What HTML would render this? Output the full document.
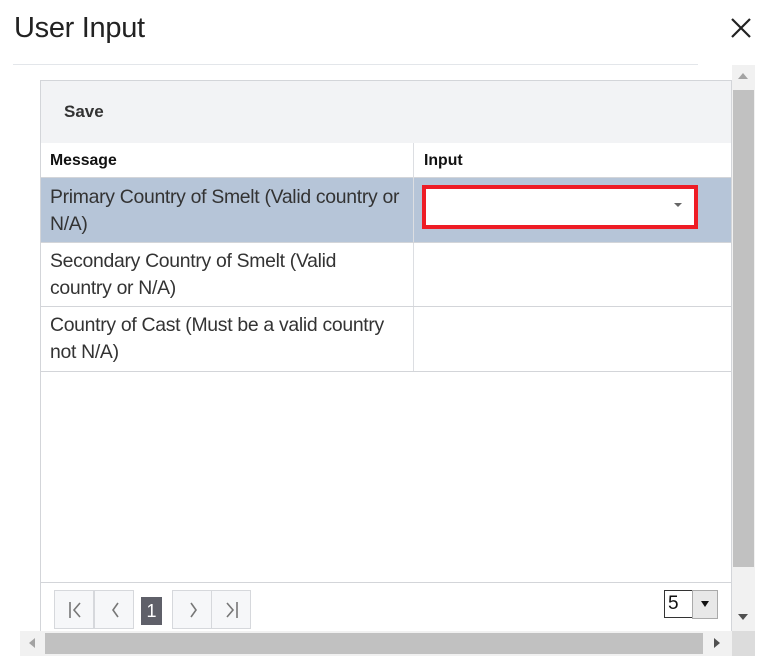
<!DOCTYPE html>
<html><head><style>
*{margin:0;padding:0;box-sizing:border-box}
body{width:772px;height:667px;background:#fff;position:relative;overflow:hidden;font-family:"Liberation Sans",Arial,sans-serif;color:#333}
.a{position:absolute}
.cell{position:absolute;font-size:19.4px;line-height:27px;color:#333;padding-left:10px;letter-spacing:-0.3px;white-space:nowrap}
.pb{position:absolute;top:590px;height:39px;width:40px;background:#f6f7f9;border:1px solid #d6d8dc}
.pb svg{position:absolute;left:12px;top:10px}
</style></head><body>
<div class="a" style="left:14px;top:12px;font-size:29px;color:#222;letter-spacing:-0.3px">User Input</div>
<svg class="a" style="left:730px;top:17px" width="22" height="22"><path d="M2 2L20 20M20 2L2 20" stroke="#222" stroke-width="2.2"/></svg>
<div class="a" style="left:13px;top:64px;width:685px;height:1px;background:#e3e6ea"></div>

<div class="a" style="left:40px;top:80px;width:692px;height:560px;border:1px solid #d3d5d9;background:#fff"></div>
<div class="a" style="left:41px;top:81px;width:690px;height:62px;background:#f2f3f5"></div>
<div class="a" style="left:64px;top:102px;font-size:17px;font-weight:bold;color:#333">Save</div>
<div class="a" style="left:41px;top:143px;width:690px;height:34px;background:#fff"></div>
<div class="a" style="left:50px;top:152px;font-size:15.8px;font-weight:bold;color:#111">Message</div>
<div class="a" style="left:424px;top:152px;font-size:15.8px;font-weight:bold;color:#111">Input</div>
<div class="a" style="left:413px;top:143px;width:1px;height:229px;background:#dcdee2"></div>
<div class="a" style="left:41px;top:177px;width:690px;height:65px;background:#b6c5d8;border-top:1px solid #d3d5d9"></div>
<div class="a" style="left:413px;top:177px;width:1px;height:65px;background:#dcdee2"></div>
<div class="cell" style="left:40px;top:184px">Primary Country of Smelt (Valid country or<br>N/A)</div>
<div class="a" style="left:422px;top:185px;width:276px;height:44px;border:4px solid #ee1c25;background:#fff"></div>
<svg class="a" style="left:674px;top:202px" width="8" height="6"><path d="M0 1L8 1L4 5Z" fill="#666"/></svg>
<div class="a" style="left:41px;top:242px;width:690px;height:1px;background:#d3d5d9"></div>
<div class="cell" style="left:40px;top:248px">Secondary Country of Smelt (Valid<br>country or N/A)</div>
<div class="a" style="left:41px;top:306px;width:690px;height:1px;background:#d3d5d9"></div>
<div class="cell" style="left:40px;top:312px">Country of Cast (Must be a valid country<br>not N/A)</div>
<div class="a" style="left:41px;top:371px;width:690px;height:1px;background:#d3d5d9"></div>
<div class="a" style="left:41px;top:582px;width:690px;height:1px;background:#d3d5d9"></div>

<div class="pb" style="left:54px"><svg width="16" height="18"><path d="M3 1V17M13 2L7 9L13 16" stroke="#777" stroke-width="1.6" fill="none"/></svg></div>
<div class="pb" style="left:94px"><svg width="16" height="18"><path d="M11 2L6 9L11 16" stroke="#777" stroke-width="1.6" fill="none"/></svg></div>
<div class="a" style="left:141px;top:597px;width:21px;height:28px;background:#5f6069;color:#fff;font-size:18px;text-align:center;line-height:28px">1</div>
<div class="pb" style="left:172px"><svg width="16" height="18"><path d="M6 2L11 9L6 16" stroke="#777" stroke-width="1.6" fill="none"/></svg></div>
<div class="pb" style="left:211px"><svg width="16" height="18"><path d="M3 2L9 9L3 16M13 1V17" stroke="#777" stroke-width="1.6" fill="none"/></svg></div>
<div class="a" style="left:664px;top:590px;width:28px;height:28px;border:1px solid #333;border-right:none;background:#fff;font-size:19px;line-height:26px;padding-left:3px;color:#111">5</div>
<div class="a" style="left:692px;top:590px;width:26px;height:29px;background:#e8e8e8;border:1px solid #aaa"></div>
<svg class="a" style="left:701px;top:601px" width="8" height="7"><path d="M0 0L8 0L4 6Z" fill="#111"/></svg>

<div class="a" style="left:732px;top:65px;width:23px;height:566px;background:#f1f1f1"></div>
<div class="a" style="left:733px;top:90px;width:21px;height:477px;background:#c1c1c1"></div>
<svg class="a" style="left:738px;top:73px" width="10" height="7"><path d="M0 6L10 6L5 0Z" fill="#a3a3a3"/></svg>
<svg class="a" style="left:738px;top:614px" width="10" height="7"><path d="M0 0L10 0L5 6Z" fill="#505050"/></svg>
<div class="a" style="left:20px;top:631px;width:735px;height:25px;background:#f1f1f1"></div>
<div class="a" style="left:45px;top:633px;width:658px;height:21px;background:#c1c1c1"></div>
<svg class="a" style="left:29px;top:638px" width="6" height="10"><path d="M6 0L6 10L0 5Z" fill="#a3a3a3"/></svg>
<svg class="a" style="left:714px;top:638px" width="6" height="10"><path d="M0 0L0 10L6 5Z" fill="#505050"/></svg>
<div class="a" style="left:732px;top:631px;width:23px;height:25px;background:#dcdcdc"></div>
</body></html>
